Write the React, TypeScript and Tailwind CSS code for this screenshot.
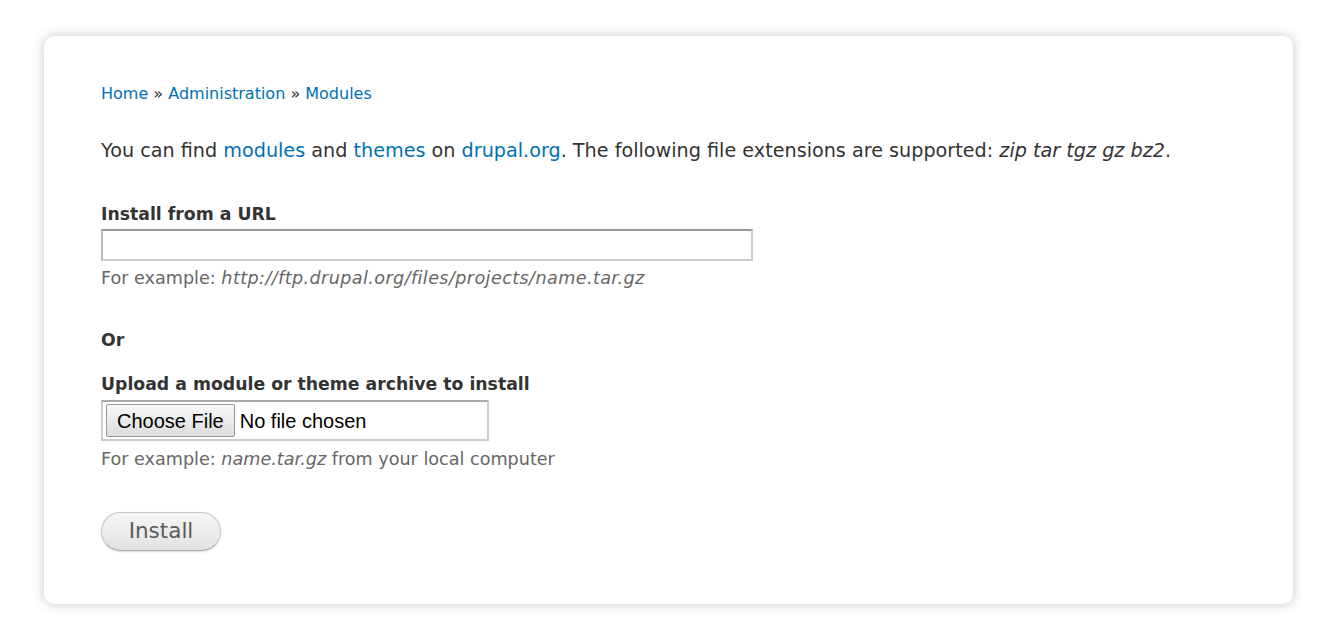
import React from "react";

export default function App() {
  const font = { fontFamily: '"DejaVu Sans", Verdana, sans-serif' };
  const arial = { fontFamily: '"Liberation Sans", Arial, sans-serif' };
  return (
    <div className="min-h-[643px] w-full bg-white pt-[36px] pl-[44px] pr-[40px] pb-[39px]" style={font}>
      <div className="w-[1249px] h-[568px] rounded-[10px] bg-white shadow-[0_0_12px_rgba(0,0,0,0.22)] pl-[57px] pt-[47px]">
        <nav className="text-[16px] leading-[22px] text-[#0071b3]">
          <a>Home</a>
          <span className="text-[#333]"> » </span>
          <a>Administration</a>
          <span className="text-[#333]"> » </span>
          <a>Modules</a>
        </nav>
        <p className="mt-[34px] text-[19.2px] leading-[24px] text-[#333]">
          You can find <a className="text-[#0071b3]">modules</a> and{" "}
          <a className="text-[#0071b3]">themes</a> on{" "}
          <a className="text-[#0071b3]">drupal.org</a>. The following file extensions are supported:{" "}
          <em>zip tar tgz gz bz2</em>.
        </p>
        <div className="mt-[40px]">
          <label className="block text-[17.3px] leading-[22px] font-bold text-[#333]">Install from a URL</label>
          <div className="mt-[4px] w-[652px] h-[32px] border-2 border-t-[#999] border-l-[#bbb] border-r-[#ccc] border-b-[#ccc] bg-white" />
          <div className="mt-[6px] text-[17.6px] leading-[22px] text-[#666]">
            For example: <em className="tracking-[0.4px]">http://ftp.drupal.org/files/projects/name.tar.gz</em>
          </div>
        </div>
        <div className="mt-[40px] text-[17.3px] leading-[22px] font-bold text-[#333]">Or</div>
        <div className="mt-[22px]">
          <label className="block text-[17.3px] leading-[22px] font-bold text-[#333]">Upload a module or theme archive to install</label>
          <div className="mt-[5px] w-[388px] h-[41px] border-2 border-[#ccc] border-t-[#aaa] flex items-center pl-[3px]">
            <div
              className="h-[33px] px-[10px] flex items-center border border-[#999] rounded-[2px] bg-gradient-to-b from-[#f8f8f8] to-[#dddddd] text-[20px] text-black"
              style={arial}
            >
              Choose File
            </div>
            <span className="ml-[5px] text-[20px] text-black" style={arial}>
              No file chosen
            </span>
          </div>
          <div className="mt-[7px] text-[17.6px] leading-[22px] text-[#666]">
            For example: <em>name.tar.gz</em> from your local computer
          </div>
        </div>
        <button className="mt-[42px] w-[120px] h-[39px] rounded-full border border-[#c5c5c5] border-b-[#aaa] bg-gradient-to-b from-[#f6f6f6] to-[#e3e3e3] text-[21.5px] text-[#5a5a5a] shadow-[0_1px_2px_rgba(0,0,0,0.15)]">
          Install
        </button>
      </div>
    </div>
  );
}
